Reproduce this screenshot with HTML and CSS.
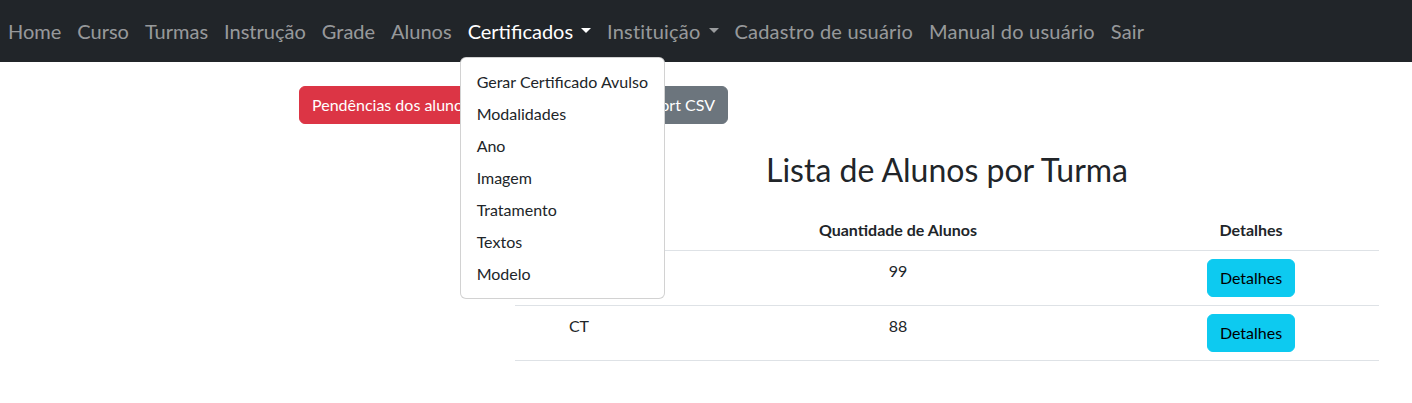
FILE: index.html
```html
<!DOCTYPE html>
<html lang="pt-BR">
<head>
<meta charset="utf-8">
<title>Lista de Alunos por Turma</title>
<link rel="stylesheet" href="styles.css">
</head>
<body>
<nav class="navbar">
  <ul class="nav">
    <li><a class="nav-link" href="#">Home</a></li>
    <li><a class="nav-link" href="#">Curso</a></li>
    <li><a class="nav-link" href="#">Turmas</a></li>
    <li><a class="nav-link" href="#">Instrução</a></li>
    <li><a class="nav-link" href="#">Grade</a></li>
    <li><a class="nav-link" href="#">Alunos</a></li>
    <li class="dropdown">
      <a class="nav-link active caret" href="#">Certificados</a>
      <ul class="dropdown-menu">
        <li><a class="dropdown-item" href="#">Gerar Certificado Avulso</a></li>
        <li><a class="dropdown-item" href="#">Modalidades</a></li>
        <li><a class="dropdown-item" href="#">Ano</a></li>
        <li><a class="dropdown-item" href="#">Imagem</a></li>
        <li><a class="dropdown-item" href="#">Tratamento</a></li>
        <li><a class="dropdown-item" href="#">Textos</a></li>
        <li><a class="dropdown-item" href="#">Modelo</a></li>
      </ul>
    </li>
    <li><a class="nav-link caret wide" href="#">Instituição</a></li>
    <li><a class="nav-link wide" href="#">Cadastro de usuário</a></li>
    <li><a class="nav-link wide" href="#">Manual do usuário</a></li>
    <li><a class="nav-link wide" href="#">Sair</a></li>
  </ul>
</nav>
<main class="main">
  <div class="actions">
    <button class="btn btn-danger">Pendências dos alunos</button>
    <button class="btn btn-secondary">Export CSV</button>
  </div>
  <section class="content">
    <h2 class="title">Lista de Alunos por Turma</h2>
    <table class="table">
      <thead>
        <tr>
          <th class="c1">Turma</th>
          <th class="c2">Quantidade de Alunos</th>
          <th class="c3">Detalhes</th>
        </tr>
      </thead>
      <tbody>
        <tr>
          <td class="c1">CC</td>
          <td class="c2">99</td>
          <td class="c3"><button class="btn btn-info">Detalhes</button></td>
        </tr>
        <tr>
          <td class="c1">CT</td>
          <td class="c2">88</td>
          <td class="c3"><button class="btn btn-info">Detalhes</button></td>
        </tr>
      </tbody>
    </table>
  </section>
</main>
</body>
</html>
```
FILE: styles.css
```css
* { box-sizing: border-box; }
body {
  margin: 0;
  font-family: Lato, "Noto Sans", sans-serif;
  font-size: 16px;
  line-height: 1.5;
  color: #212529;
  background: #fff;
}
a { text-decoration: none; }
ul { list-style: none; margin: 0; padding: 0; }

.navbar {
  background: #212529;
  padding: 8px 0;
}
.nav {
  display: flex;
  align-items: center;
}
.nav > li { position: relative; }
.nav-link {
  display: block;
  padding: 8px;
  font-size: 20px;
  line-height: 30px;
  color: rgba(255, 255, 255, 0.55);
  white-space: nowrap;
}
.nav-link.wide { letter-spacing: 0.2px; }
.nav-link.active { color: #fff; }
.caret::after {
  content: "";
  display: inline-block;
  margin-left: 0.4em;
  vertical-align: 0.28em;
  border-top: 0.25em solid;
  border-right: 0.25em solid transparent;
  border-left: 0.25em solid transparent;
  border-bottom: 0;
}
.dropdown-menu {
  position: absolute;
  top: calc(100% + 3px);
  left: 0;
  z-index: 10;
  padding: 8px 0;
  background: #fff;
  border: 1px solid rgba(0, 0, 0, 0.175);
  border-radius: 6px;
  white-space: nowrap;
}
.dropdown-item {
  display: block;
  padding: 4px 16px;
  color: #212529;
  font-size: 16px;
  line-height: 24px;
}

.btn {
  display: inline-block;
  font-family: inherit;
  font-size: 16px;
  line-height: 24px;
  padding: 6px 12px;
  border: 1px solid transparent;
  border-radius: 6px;
  cursor: pointer;
}
.btn-danger { background: #dc3545; border-color: #dc3545; color: #fff; }
.btn-secondary { background: #6c757d; border-color: #6c757d; color: #fff; }
.btn-info { background: #0dcaf0; border-color: #0dcaf0; color: #000; }

.main { padding-top: 24px; }
.actions {
  display: flex;
  justify-content: space-between;
  margin-left: 299px;
  width: 429px;
}
.content {
  margin-left: 515px;
  width: 864px;
}
.title {
  margin: 27px 0 21px;
  font-size: 32px;
  font-weight: 400;
  line-height: 38px;
  text-align: center;
}
.table {
  width: 100%;
  border-collapse: collapse;
}
.table th, .table td {
  padding: 8px;
  border-bottom: 1px solid #dee2e6;
  text-align: center;
  vertical-align: top;
}
.table th { font-weight: 700; }
.c1 { width: 128px; }
.c2 { width: 510px; }
.c3 { padding-right: 38px !important; }
```
